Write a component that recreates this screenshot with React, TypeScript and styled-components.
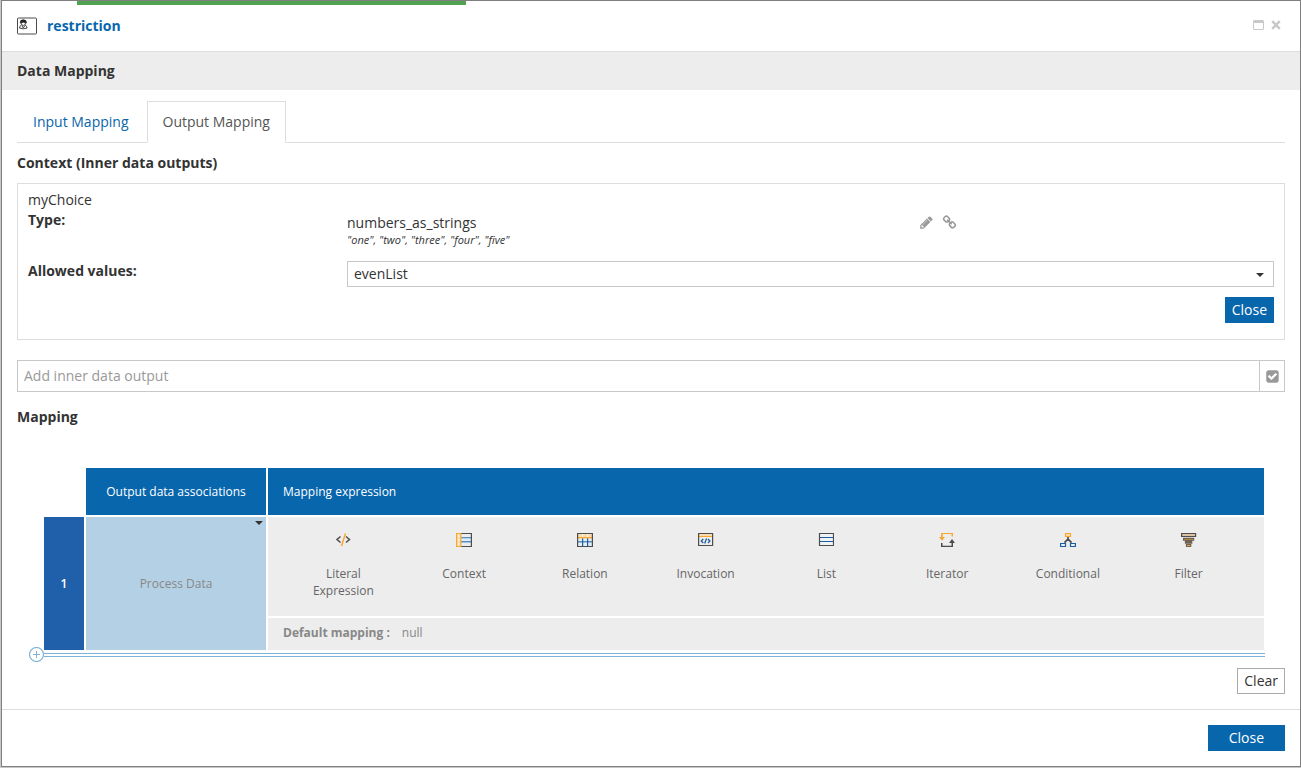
import React from "react";
import styled, { createGlobalStyle } from "styled-components";

const blue = "#0866ac";
const ink = "#333";

const GlobalStyle = createGlobalStyle`
  *, *::before, *::after { box-sizing: border-box; }
  body {
    margin: 0;
    background: #c8c8c8;
    color: ${ink};
    font: 14px/20px "Open Sans", "Noto Sans", sans-serif;
  }
  button, input, select { font: inherit; color: inherit; margin: 0; border-radius: 0; }
  button { cursor: pointer; }
`;

const Page = styled.div`
  padding: 0 0 1px 1px;
`;

const Dialog = styled.section`
  background: #fff;
  border: 1px solid #7f7f7f;
`;

const Progress = styled.div`
  width: 30%;
  height: 4px;
  margin-left: 75px;
  background: #51a351;
`;

const Header = styled.header`
  display: flex;
  align-items: center;
  height: 47px;
  padding: 0 19px 4px 15px;
  border-bottom: 1px solid #ddd;
`;

const Title = styled.h1`
  flex: 1;
  margin: 0 0 0 10px;
  font-size: 14px;
  line-height: 20px;
  font-weight: 700;
  color: ${blue};
`;

const IconButton = styled.button`
  display: inline-flex;
  align-items: center;
  justify-content: center;
  padding: 0;
  border: 0;
  background: none;
  color: #999;
`;

const WindowActions = styled.div`
  display: flex;
  align-items: center;
  gap: 7px;
  padding-bottom: 3px;
`;

const SectionBar = styled.h2`
  margin: 0;
  padding: 9px 15px;
  background: #ededed;
  font-size: 14px;
  line-height: 20px;
`;

const Body = styled.main`
  padding: 11px 15px 15px;
`;

const Tabs = styled.nav`
  display: flex;
  gap: 2px;
  border-bottom: 1px solid #ddd;
`;

const Tab = styled.button<{ $active?: boolean }>`
  height: 42px;
  margin-bottom: -1px;
  padding: 0 15px;
  border: 1px solid ${(p) => (p.$active ? "#ddd" : "transparent")};
  border-bottom-color: ${(p) => (p.$active ? "#fff" : "transparent")};
  background: ${(p) => (p.$active ? "#fff" : "transparent")};
  color: ${(p) => (p.$active ? "#555" : blue)};
`;

const Heading = styled.h3`
  margin: 10px 0;
  font-size: 14px;
  line-height: 20px;
`;

const Panel = styled.section`
  padding: 6px 10px 16px;
  border: 1px solid #ddd;
`;

const Field = styled.div`
  display: grid;
  grid-template-columns: 319fr 572fr 355fr;
`;

const FieldLabel = styled.label`
  font-weight: 700;
`;

const TypeValue = styled.div`
  padding: 3px 0 15px;
`;

const TypeNote = styled.div`
  font-size: 11px;
  line-height: 13px;
  font-style: italic;
`;

const TypeActions = styled.div`
  display: flex;
  align-items: flex-start;
  gap: 10px;
  padding: 6px 0 0 1px;
`;

const SelectBox = styled.div`
  position: relative;
  grid-column: 2 / 4;
`;

const Select = styled.select`
  display: block;
  appearance: none;
  width: 100%;
  height: 26px;
  padding: 0 24px 0 6px;
  border: 1px solid #c8c8c8;
  background: #fff;
`;

const Caret = styled.span<{ $top: number; $right: number }>`
  position: absolute;
  top: ${(p) => p.$top}px;
  right: ${(p) => p.$right}px;
  border: 4px solid transparent;
  border-top-color: ${ink};
  border-bottom: 0;
  pointer-events: none;
`;

const Actions = styled.div`
  display: flex;
  justify-content: flex-end;
  padding-top: 10px;
`;

const Button = styled.button<{ $primary?: boolean; $wide?: boolean }>`
  height: 26px;
  padding: 0 ${(p) => (p.$wide ? 20 : 6)}px;
  border: 1px solid ${(p) => (p.$primary ? blue : "#aaa")};
  background: ${(p) => (p.$primary ? blue : "#fff")};
  color: ${(p) => (p.$primary ? "#fff" : ink)};
`;

const AddRow = styled.div`
  display: flex;
  height: 32px;
  margin: 20px 0 15px;
  border: 1px solid #c8c8c8;

  input {
    flex: 1;
    min-width: 0;
    padding: 0 6px;
    border: 0;
    background: none;
  }
  input::placeholder { color: #999; opacity: 1; }
  button {
    width: 25px;
    border-left: 1px solid #c8c8c8;
  }
`;

const Editor = styled.div`
  margin: 39px 20px 0 12px;
`;

const Table = styled.table`
  width: calc(100% - 12px);
  margin-left: 13px;
  table-layout: fixed;
  border-spacing: 2px;
  font-size: 12px;
  line-height: 17px;

  td, th { padding: 0; }
`;

const HeadCell = styled.th<{ $left?: boolean }>`
  && { padding: 0 15px; }
  height: 47px;
  background: ${blue};
  color: #fff;
  font-weight: 400;
  text-align: ${(p) => (p.$left ? "left" : "center")};
`;

const RowNumber = styled.th`
  background: #2060ab;
  color: #fff;
  font-weight: 600;
`;

const AssociationCell = styled.td`
  position: relative;
  background: #b4d0e4;
`;

const AssociationSelect = styled.select`
  display: block;
  appearance: none;
  width: 100%;
  height: 133px;
  border: 0;
  background: none;
  color: #888;
  text-align-last: center;
`;

const ExpressionCell = styled.td`
  && { padding: 15px 15px 0; }
  height: 99px;
  background: #ededed;
  vertical-align: top;
`;

const ExpressionList = styled.div`
  display: grid;
  grid-template-columns: repeat(8, 1fr);
  align-items: start;
`;

const Expression = styled.button`
  display: flex;
  flex-direction: column;
  align-items: center;
  gap: 17px;
  padding: 0 24px;
  border: 0;
  background: none;
  color: #666;
`;

const DefaultCell = styled.td`
  && { padding: 0 15px 4px; }
  height: 32px;
  background: #ededed;
  color: #888;

  strong { margin-right: 12px; }
`;

const AddLine = styled.div`
  display: flex;
  align-items: center;
  height: 5px;

  &::after {
    content: "";
    flex: 1;
    align-self: flex-end;
    height: 4px;
    border: solid #7fb2d7;
    border-width: 1px 0;
  }
`;

const ClearRow = styled(Actions)`
  padding-top: 11px;
`;

const Footer = styled.footer`
  display: flex;
  justify-content: flex-end;
  padding: 15px;
  border-top: 1px solid #ddd;
`;

const dark = "#4d4d4d";
const orange = "#f7a833";
const pale = "#fbdcae";
const navy = "#1f5e9e";

const FormIcon = () => (
  <svg width="20" height="18" viewBox="0 0 20 18" fill="none" aria-hidden="true">
    <rect x=".5" y="1" width="19" height="16" rx="1" stroke="#4a4a4a" />
    <path d="M3.300 6Q2.800 2.800 6.300 2.800T9.300 6Q6.500 4.300 3.300 6Z" fill="#222" stroke="#222" strokeWidth=".8" />
    <path d="M4 5.700Q4.200 8.500 6.300 8.500T8.700 5.700M4.600 8Q2.500 8.700 2.500 11.100Q6.300 12.500 10 11.100Q10 8.700 8 8M5 8.800L6.300 11L7.700 8.800" stroke="#444" />
  </svg>
);

const MaximizeIcon = () => (
  <svg width="11" height="10" viewBox="0 0 11 10" aria-hidden="true">
    <path fill="#c9c9c9" fillRule="evenodd" d="M1 0h9l1 1v8l-1 1H1L0 9V1zM1 3v6h9V3z" />
  </svg>
);

const CrossIcon = () => (
  <svg width="10" height="10" viewBox="0 0 10 10" aria-hidden="true">
    <path d="M1.200 1.200l7.600 7.600M8.800 1.200l-7.600 7.600" stroke="#c9c9c9" strokeWidth="2.500" />
  </svg>
);

const solidPaths = {
  pencil:
    "M491 1536l91-91-235-235-91 91v107h128v128h107zm523-928q0-22-22-22-10 0-17 7l-542 542q-7 7-7 17 0 22 22 22 10 0 17-7l542-542q7-7 7-17zm-54-192l416 416-832 832h-416v-416zm683 96q0 53-37 90l-166 166-416-416 166-165q36-38 90-38 53 0 91 38l235 234q37 39 37 91z",
  link:
    "M1520 1216q0-40-28-68l-208-208q-28-28-68-28-42 0-72 32 3 3 19 18.500t21.500 21.500 15 19 13 25.500 3.500 27.500q0 40-28 68t-68 28q-15 0-27.500-3.500t-25.500-13-19-15-21.500-21.500-18.500-19q-33 31-33 73 0 40 28 68l206 207q27 27 68 27 40 0 68-26l147-146q28-28 28-67zm-703-705q0-40-28-68l-206-207q-28-28-68-28-39 0-68 27l-147 146q-28 28-28 67 0 40 28 68l208 208q27 27 68 27 42 0 72-31-3-3-19-18.500t-21.500-21.500-15-19-13-25.500-3.500-27.500q0-40 28-68t68-28q15 0 27.500 3.500t25.500 13 19 15 21.500 21.500 18.500 19q33-31 33-73zm895 705q0 120-85 203l-147 146q-83 83-203 83-121 0-204-85l-206-207q-83-83-83-203 0-123 88-209l-88-88q-86 88-208 88-120 0-204-84l-208-208q-84-84-84-204t85-203l147-146q83-83 203-83 121 0 204 85l206 207q83 83 83 203 0 123-88 209l88 88q86-88 208-88 120 0 204 84l208 208q84 84 84 204z",
  check:
    "M813 1299l614-614q19-19 19-45t-19-45l-102-102q-19-19-45-19t-45 19l-467 467-211-211q-19-19-45-19t-45 19l-102 102q-19 19-19 45t19 45l358 358q19 19 45 19t45-19zm851-883v960q0 119-84.500 203.500t-203.500 84.500h-960q-119 0-203.500-84.500t-84.500-203.500v-960q0-119 84.500-203.500t203.500-84.500h960q119 0 203.500 84.500t84.500 203.500z",
};

const SolidIcon = ({ name }: { name: keyof typeof solidPaths }) => (
  <svg width="13" height="13" viewBox="100 100 1600 1600" fill="#999" overflow="visible" aria-hidden="true">
    <path d={solidPaths[name]} />
  </svg>
);

const PlusCircle = () => (
  <svg width="15" height="15" viewBox="0 0 15 15" fill="none" stroke="#7fb2d7" aria-hidden="true">
    <circle cx="7.500" cy="7.500" r="7" strokeWidth="1.200" />
    <path d="M4 7.500h7M7.500 4v7" />
  </svg>
);

const glyphs: Record<string, React.ReactNode> = {
  literal: (
    <>
      <path d="M5.500 4.500L2 7.500l3.500 3M11 4.500l3.500 3-3.500 3" stroke={dark} strokeWidth="1.500" fill="none" />
      <path d="M10.500 1.500L6.500 14" stroke={orange} strokeWidth="1.500" />
    </>
  ),
  context: (
    <>
      <path fill="#e8eef2" d="M5 2h10v12H5z" />
      <path fill="#5c8fc0" d="M5 5h10v1.600H5zM5 9h10v1.600H5z" />
      <path fill="#dcecf8" d="M5 6.600h10V9H5z" />
      <path stroke={dark} strokeWidth="1.200" fill="none" d="M5 1.500h10.400v13H5" />
      <path fill={pale} stroke={orange} strokeWidth="1.200" d="M.6 1.500h4.200v13H.6z" />
      <path stroke="#fff" strokeWidth="1.500" opacity=".6" strokeDasharray="2 2" d="M2.700 3v10" />
    </>
  ),
  relation: (
    <>
      <path fill="#e4edf4" d="M1 6h14v8H1z" />
      <path fill={pale} d="M1 2h14v4H1z" />
      <path fill={orange} d="M1 5h14v1.400H1z" />
      <path fill="#fff" opacity=".6" d="M5 2h1.200v3H5zM10 2h1.200v3H10z" />
      <path fill="#5c8fc0" d="M1 9h14v1.500H1z" />
      <path fill={navy} d="M5 6.400h1.200v8H5zM10 6.400h1.200v8H10z" />
      <path stroke={dark} strokeWidth="1.200" fill="none" d="M.6 1.500h14.800v13H.6z" />
    </>
  ),
  invocation: (
    <>
      <path fill={pale} d="M1 2h13v2H1z" />
      <path fill={orange} d="M1 4h13v1H1z" />
      <path stroke={dark} strokeWidth="1.200" fill="none" d="M.6 1.500h14v12H.6z" />
      <path stroke={navy} fill="none" strokeWidth="1.300" d="M5.300 7l-2 2 2 2M9.900 7l2 2-2 2M8.500 6.500l-1.800 5" />
    </>
  ),
  list: (
    <>
      <path fill="#f0f3f5" d="M1 2h14v11H1z" />
      <path fill={navy} d="M1.500 5h14v1h-14zM1.500 9h14v1h-14z" />
      <path stroke={dark} strokeWidth="1.200" fill="none" d="M1.500 1.500h14v12h-14z" />
    </>
  ),
  iterator: (
    <>
      <path fill={orange} d="M2 1h12v3.500h-1.500V2H3.700v3H6L3 8.800 0 5h2z" />
      <path fill={dark} d="M14 15H2v-4h1.500v2.700h9V11H10L13 7l3 4h-2z" />
    </>
  ),
  conditional: (
    <>
      <path stroke={dark} fill="none" strokeWidth="1.700" d="M8 5v3M8 7l-3.500 3.700M8 7l3.500 3.700" />
      <path stroke={orange} strokeWidth="1.200" fill={pale} d="M5.500 1.500h5v3h-5z" />
      <path stroke={navy} strokeWidth="1.200" fill="#e8f2f8" d="M.6 11.500h4.900v3H.6zM10.500 11.500h4.900v3h-4.900z" />
    </>
  ),
  filter: (
    <>
      <path stroke={dark} strokeWidth="1.200" fill="#d9c3a0" d="M.6 1.500h14v3H.6z" />
      <path stroke="#6d6253" strokeWidth="1.300" fill={orange} d="M2.600 6.400h10v1.700h-10zM4.500 9.500h6.200v1.500H4.500z" />
      <path stroke="#6d6253" strokeWidth="1.200" fill={orange} d="M5.500 12.500h4.200v2H5.500z" />
    </>
  ),
};

const expressions = [
  { glyph: "literal", label: "Literal Expression" },
  { glyph: "context", label: "Context" },
  { glyph: "relation", label: "Relation" },
  { glyph: "invocation", label: "Invocation" },
  { glyph: "list", label: "List" },
  { glyph: "iterator", label: "Iterator" },
  { glyph: "conditional", label: "Conditional" },
  { glyph: "filter", label: "Filter" },
];

export default function App() {
  return (
    <Page>
      <GlobalStyle />
      <Dialog role="dialog" aria-labelledby="dialog-title">
        <Progress />
        <Header>
          <FormIcon />
          <Title id="dialog-title">restriction</Title>
          <WindowActions>
            <IconButton aria-label="Maximize"><MaximizeIcon /></IconButton>
            <IconButton aria-label="Dismiss"><CrossIcon /></IconButton>
          </WindowActions>
        </Header>
        <SectionBar>Data Mapping</SectionBar>
        <Body>
          <Tabs role="tablist">
            <Tab role="tab" aria-selected="false">Input Mapping</Tab>
            <Tab role="tab" aria-selected="true" $active>Output Mapping</Tab>
          </Tabs>

          <Heading>Context (Inner data outputs)</Heading>
          <Panel>
            <div>myChoice</div>
            <Field>
              <FieldLabel as="span">Type:</FieldLabel>
              <TypeValue>
                numbers_as_strings
                <TypeNote>"one", "two", "three", "four", "five"</TypeNote>
              </TypeValue>
              <TypeActions>
                <IconButton aria-label="Edit type"><SolidIcon name="pencil" /></IconButton>
                <IconButton aria-label="Link type"><SolidIcon name="link" /></IconButton>
              </TypeActions>
            </Field>
            <Field>
              <FieldLabel htmlFor="allowed">Allowed values:</FieldLabel>
              <SelectBox>
                <Select id="allowed" defaultValue="evenList">
                  <option>evenList</option>
                </Select>
                <Caret $top={12} $right={10} />
              </SelectBox>
            </Field>
            <Actions>
              <Button $primary>Close</Button>
            </Actions>
          </Panel>

          <AddRow>
            <input aria-label="Add inner data output" placeholder="Add inner data output" />
            <IconButton aria-label="Confirm"><SolidIcon name="check" /></IconButton>
          </AddRow>

          <Heading>Mapping</Heading>
          <Editor>
            <Table>
              <colgroup>
                <col style={{ width: 40 }} />
                <col style={{ width: 180 }} />
                <col />
              </colgroup>
              <thead>
                <tr>
                  <td />
                  <HeadCell>Output data associations</HeadCell>
                  <HeadCell $left>Mapping expression</HeadCell>
                </tr>
              </thead>
              <tbody>
                <tr>
                  <RowNumber rowSpan={2} scope="row">1</RowNumber>
                  <AssociationCell rowSpan={2}>
                    <AssociationSelect aria-label="Output data association" defaultValue="Process Data">
                      <option>Process Data</option>
                    </AssociationSelect>
                    <Caret $top={4} $right={3} />
                  </AssociationCell>
                  <ExpressionCell>
                    <ExpressionList>
                      {expressions.map((e) => (
                        <Expression key={e.glyph}>
                          <svg width="16" height="16" viewBox="0 0 16 16" aria-hidden="true">
                            {glyphs[e.glyph]}
                          </svg>
                          <span>{e.label}</span>
                        </Expression>
                      ))}
                    </ExpressionList>
                  </ExpressionCell>
                </tr>
                <tr>
                  <DefaultCell>
                    <strong>Default mapping :</strong>null
                  </DefaultCell>
                </tr>
              </tbody>
            </Table>
            <AddLine>
              <IconButton aria-label="Add row"><PlusCircle /></IconButton>
            </AddLine>
          </Editor>
          <ClearRow>
            <Button>Clear</Button>
          </ClearRow>
        </Body>
        <Footer>
          <Button $primary $wide>Close</Button>
        </Footer>
      </Dialog>
    </Page>
  );
}
